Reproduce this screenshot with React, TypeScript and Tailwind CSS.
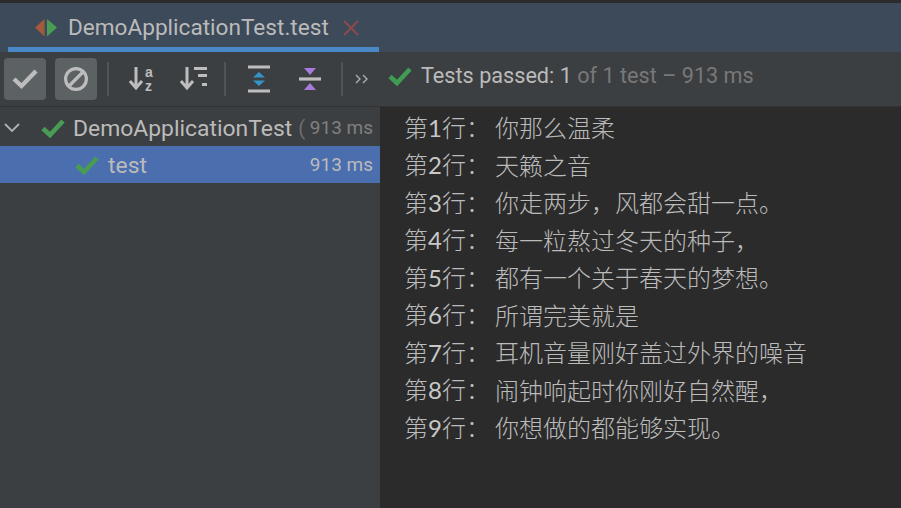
import React from 'react';

const lines = [
  ['1', '你那么温柔'],
  ['2', '天籁之音'],
  ['3', '你走两步，风都会甜一点。'],
  ['4', '每一粒熬过冬天的种子，'],
  ['5', '都有一个关于春天的梦想。'],
  ['6', '所谓完美就是'],
  ['7', '耳机音量刚好盖过外界的噪音'],
  ['8', '闹钟响起时你刚好自然醒，'],
  ['9', '你想做的都能够实现。'],
];

const Check = ({ size = 24, color = '#499c54' }: { size?: number; color?: string }) => (
  <svg width={size} height={size} viewBox="0 0 24 24" className="shrink-0">
    <path d="M2 12.5 L9 19 L22 5" fill="none" stroke={color} strokeWidth="4.6" />
  </svg>
);

const Separator = () => <div className="w-[2px] h-[34px] bg-[#515456] shrink-0" />;

const App = () => {
  return (
    <div className="w-[901px] h-[508px] overflow-hidden flex flex-col bg-[#2b2b2b] font-['Liberation_Sans','Noto_Sans_CJK_SC',sans-serif] text-[#bbbbbb]">
      <div className="h-[3px] bg-[#2b2b2b]" />
      {/* tab bar */}
      <div className="h-[49px] bg-[#3d4a5a] flex pl-[8px]">
        <div className="w-[371px] border-b-[5px] border-[#4a88c7] flex items-center pl-[26px] pt-[6px]">
          <svg width="24" height="20" viewBox="0 0 24 20" className="shrink-0">
            <path d="M10.5 1 V18.5 L1 9.5 Z" fill="#a3593c" />
            <path d="M13 1 V18.5 L23 9.5 Z" fill="#499c54" />
          </svg>
          <span className="ml-[10px] text-[22.6px] leading-none font-['Roboto',sans-serif]">DemoApplicationTest.test</span>
          <svg width="16" height="16" viewBox="0 0 16 16" className="ml-[14px] shrink-0">
            <path d="M1 1 L15 15 M15 1 L1 15" stroke="#8f4a4a" strokeWidth="1.8" />
          </svg>
        </div>
      </div>
      {/* toolbar */}
      <div className="h-[55px] bg-[#3c3f41] border-b border-[#323232] flex items-center pl-[4px] shrink-0">
        <div className="w-[42px] h-[42px] rounded-[4px] bg-[#5c6164] flex items-center justify-center">
          <svg width="26" height="22" viewBox="0 0 26 22">
            <path d="M2 11 L9.5 18 L24 3" fill="none" stroke="#bdbdbd" strokeWidth="4.4" />
          </svg>
        </div>
        <div className="w-[42px] h-[42px] rounded-[4px] bg-[#5c6164] flex items-center justify-center ml-[9px]">
          <svg width="26" height="26" viewBox="0 0 26 26">
            <circle cx="13" cy="13" r="10.4" fill="none" stroke="#bdbdbd" strokeWidth="3.2" />
            <path d="M6.5 19.5 L19.5 6.5" stroke="#bdbdbd" strokeWidth="3.2" />
          </svg>
        </div>
        <div className="ml-[10px]"><Separator /></div>
        <svg width="26" height="28" viewBox="0 0 26 28" className="ml-[20px] shrink-0">
          <path d="M7 2 V22 M1 16 L7 23 L13 16" fill="none" stroke="#bdbdbd" strokeWidth="3" />
          <text x="16" y="11.5" fontSize="14" fontWeight="700" fill="#bdbdbd" fontFamily="Liberation Sans">a</text>
          <text x="16" y="26" fontSize="14" fontWeight="700" fill="#bdbdbd" fontFamily="Liberation Sans">z</text>
        </svg>
        <svg width="27" height="28" viewBox="0 0 27 28" className="ml-[25px] shrink-0">
          <path d="M7 2 V22 M1 16 L7 23 L13 16" fill="none" stroke="#bdbdbd" strokeWidth="3" />
          <path d="M14 3.5 H27 M18 10.5 H27 M22 19.5 H27" stroke="#bdbdbd" strokeWidth="3.2" />
        </svg>
        <div className="ml-[17px]"><Separator /></div>
        <svg width="24" height="28" viewBox="0 0 24 28" className="ml-[21px] shrink-0">
          <path d="M1 2 H23 M1 26 H23" stroke="#bdbdbd" strokeWidth="3.2" />
          <path d="M12 7 L18 12.5 H6 Z M12 21 L18 15.5 H6 Z" fill="#3592c4" />
        </svg>
        <svg width="24" height="26" viewBox="0 0 24 26" className="ml-[27px] shrink-0">
          <path d="M1 13 H23" stroke="#bdbdbd" strokeWidth="3.2" />
          <path d="M6 2 H18 L12 9 Z M6 24 H18 L12 17 Z" fill="#a77bdb" />
        </svg>
        <div className="ml-[19px]"><Separator /></div>
        <svg width="14" height="10" viewBox="0 0 14 10" className="ml-[12px] shrink-0">
          <path d="M1 1 L5 5 L1 9 M8 1 L12 5 L8 9" fill="none" stroke="#afb1b3" strokeWidth="1.3" />
        </svg>
        <div className="ml-[19px] mb-[6px]"><Check size={24} color="#3f9c52" /></div>
        <span className="ml-[9px] mb-[6px] text-[21.65px] leading-none font-['Roboto',sans-serif]">
          Tests passed: 1 <span className="text-[#787878]">of 1 test – 913 ms</span>
        </span>
      </div>
      <div className="flex flex-1 min-h-0">
        {/* tree */}
        <div className="w-[380px] bg-[#3c3f41] shrink-0 pt-[2px] font-['Roboto',sans-serif]">
          <div className="h-[37px] flex items-center">
            <svg width="16" height="10" viewBox="0 0 16 10" className="ml-[4px] shrink-0">
              <path d="M1 1 L8 8 L15 1" fill="none" stroke="#afb1b3" strokeWidth="1.8" />
            </svg>
            <div className="ml-[21px]"><Check size={24} /></div>
            <span className="ml-[8px] pt-[4px] text-[22.9px] leading-none">DemoApplicationTest</span>
            <span className="ml-[6px] text-[#6f6f6f] text-[20px] leading-none">(</span>
            <span className="ml-auto mr-[7px] text-[#808080] text-[19px] leading-none">913 ms</span>
          </div>
          <div className="h-[37px] flex items-center bg-[#4b6eaf]">
            <div className="ml-[75px]"><Check size={24} /></div>
            <span className="ml-[9px] pt-[4px] text-[22.9px] leading-none">test</span>
            <span className="ml-auto mr-[7px] text-[19px] leading-none">913 ms</span>
          </div>
        </div>
        {/* console */}
        <div className="flex-1 pl-[24px] pt-[1.5px] text-[24px] font-light font-['Noto_Sans_CJK_SC',sans-serif] text-[#bbbbbb]">
          {lines.map(([num, text]) => (
            <div key={num} className="h-[37.5px] flex items-center whitespace-nowrap leading-none">
              <span>第<span className="font-normal font-['Lato',sans-serif] text-[#c8c8c8]">{num}</span>行：</span>
              <span className="ml-[5px]">{text}</span>
            </div>
          ))}
        </div>
      </div>
    </div>
  );
};

export default App;
